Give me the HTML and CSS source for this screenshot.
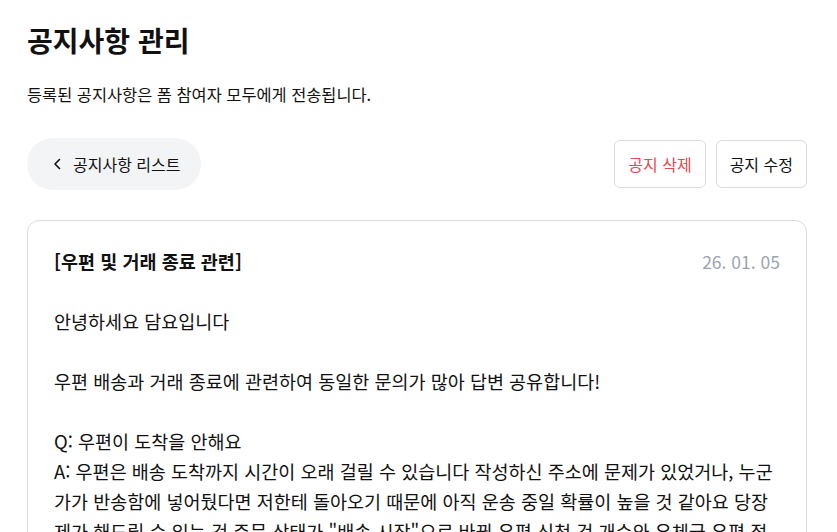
FILE: index.html
```html
<!DOCTYPE html>
<html lang="ko">
<head>
    <meta charset="UTF-8">
    <meta name="viewport" content="width=device-width, initial-scale=1.0">
    <title>공지사항 관리</title>
    <link rel="stylesheet" href="styles.css">
</head>
<body>
    <div class="page">
        <h1>공지사항 관리</h1>
        <p class="desc">등록된 공지사항은 폼 참여자 모두에게 전송됩니다.</p>

        <div class="toolbar">
            <button class="back-btn">
                <svg class="chevron" width="20" height="20" viewBox="0 0 20 20" fill="none">
                    <path d="M12.5 5.5 L8 10 L12.5 14.5" stroke="#111" stroke-width="1.6" stroke-linecap="round" stroke-linejoin="round"/>
                </svg>
                <span>공지사항 리스트</span>
            </button>
            <div class="actions">
                <button class="btn btn-danger">공지 삭제</button>
                <button class="btn">공지 수정</button>
            </div>
        </div>

        <div class="notice">
            <div class="notice-head">
                <h2>[우편 및 거래 종료 관련]</h2>
                <span class="date">26. 01. 05</span>
            </div>
            <div class="notice-body">
                <p>안녕하세요 담요입니다</p>
                <p class="blank"></p>
                <p>우편 배송과 거래 종료에 관련하여 동일한 문의가 많아 답변 공유합니다!</p>
                <p class="blank"></p>
                <p>Q: 우편이 도착을 안해요</p>
                <p>A: 우편은 배송 도착까지 시간이 오래 걸릴 수 있습니다 작성하신 주소에 문제가 있었거나, 누군가가 반송함에 넣어뒀다면 저한테 돌아오기 때문에 아직 운송 중일 확률이 높을 것 같아요 당장 제가 해드릴 수 있는 건 주문 상태가 "배송 시작"으로 바뀐 우편 신청 건 개수와 우체국 우편 접수 내역을 확인해 드리는 것입니다</p>
            </div>
        </div>
    </div>
</body>
</html>
```

FILE: styles.css
```css
body {
    margin: 0;
    padding: 0;
    background-color: #ffffff;
    color: #111;
    font-family: 'Noto Sans CJK KR', 'Noto Sans', sans-serif;
}

.page {
    padding: 22px 30px 0 27px;
}

h1 {
    margin: 0;
    font-size: 28px;
    line-height: 36px;
    font-weight: 700;
}

.desc {
    margin: 25px 0 0;
    font-size: 16.4px;
    line-height: 22px;
}

.toolbar {
    margin-top: 33px;
    display: flex;
    justify-content: space-between;
    align-items: center;
}

button {
    font-family: inherit;
    cursor: pointer;
}

.back-btn {
    display: flex;
    align-items: center;
    gap: 6px;
    height: 52px;
    padding: 0 20px;
    border: none;
    border-radius: 26px;
    background-color: #f3f4f6;
    color: #111;
    font-size: 16px;
}

.actions {
    display: flex;
    gap: 10px;
}

.btn {
    height: 48px;
    padding: 0 13px;
    border: 1px solid #dcdcdc;
    border-radius: 6px;
    background-color: #fff;
    color: #111;
    font-size: 16px;
}

.btn-danger {
    color: #e5484d;
}

.notice {
    margin-top: 30px;
    border: 1px solid #dcdcdc;
    border-radius: 12px;
    padding: 27px 26px 30px 26px;
}

.notice-head {
    display: flex;
    justify-content: space-between;
    align-items: center;
}

.notice-head h2 {
    margin: 0;
    font-size: 18.5px;
    line-height: 26px;
    font-weight: 700;
}

.date {
    color: #9ca3af;
    font-size: 17.5px;
}

.notice-body {
    margin-top: 32px;
    font-size: 18.5px;
    line-height: 30px;
}

.notice-body p {
    margin: 0;
}

.notice-body .blank {
    height: 30px;
}
```
